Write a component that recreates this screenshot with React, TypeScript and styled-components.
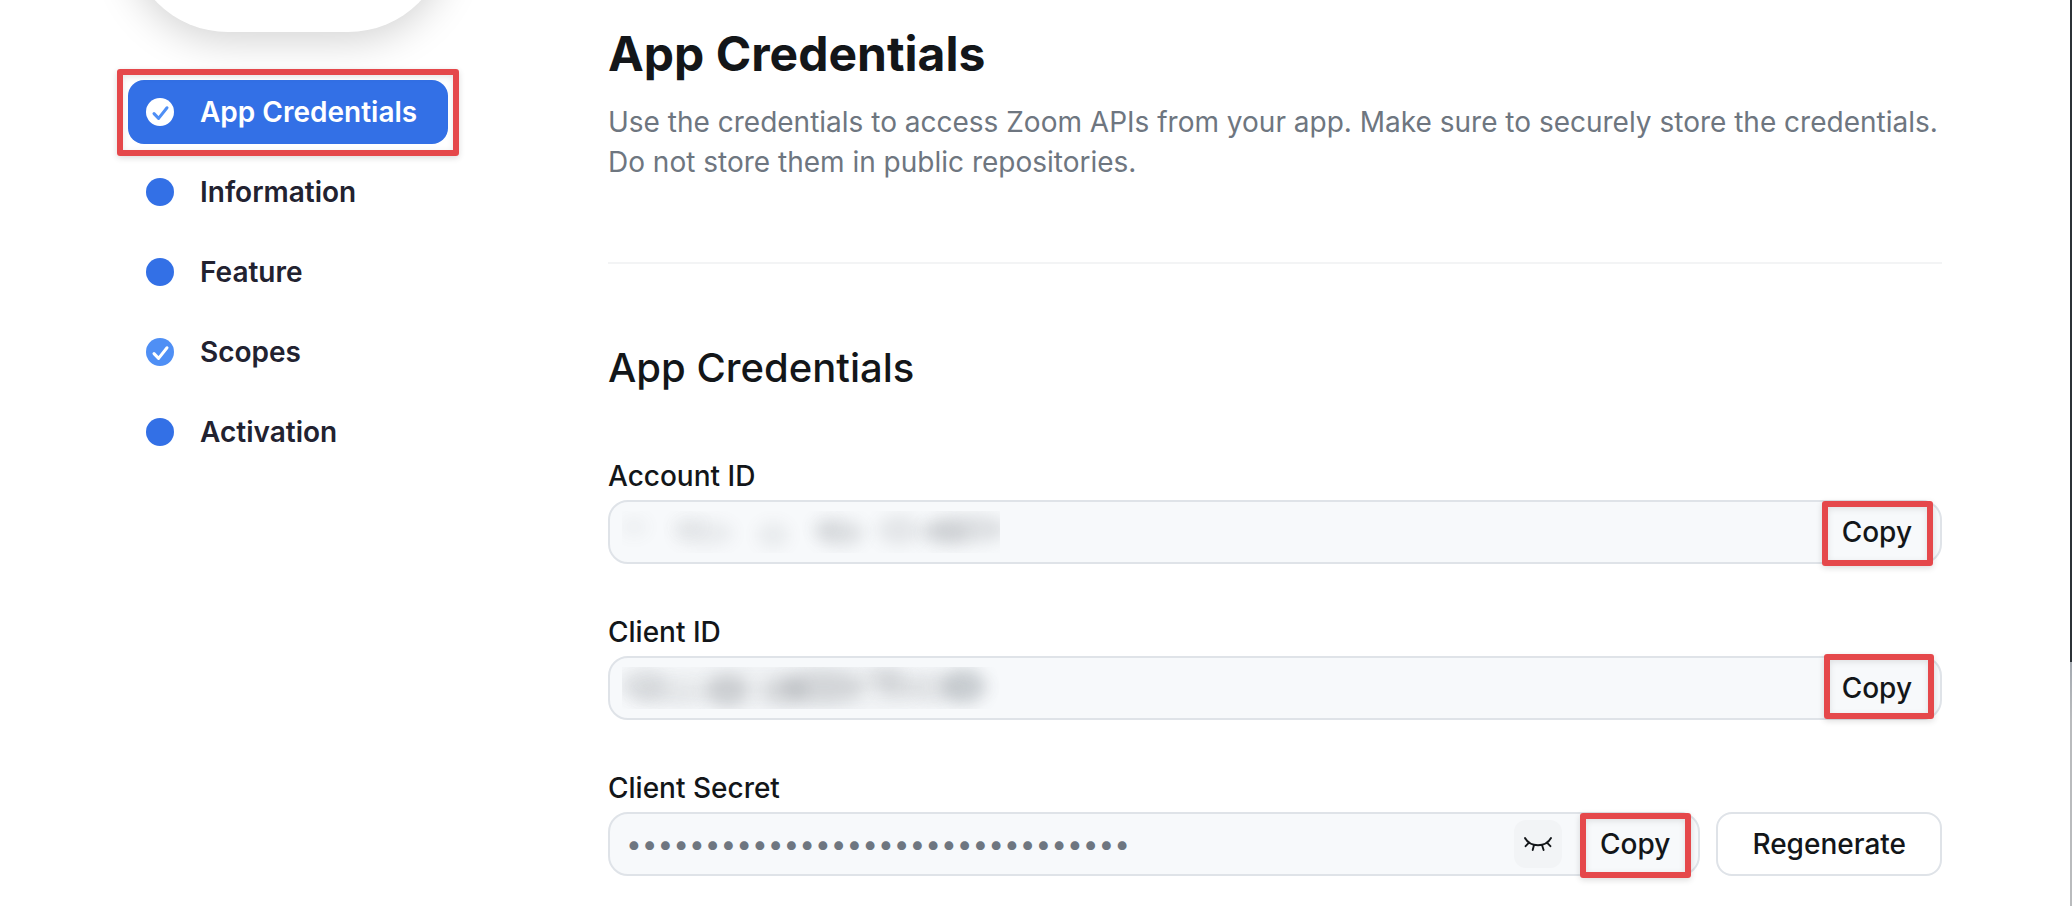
import React from "react";
import styled, { createGlobalStyle } from "styled-components";

const GlobalStyle = createGlobalStyle`
  *, *::before, *::after { box-sizing: border-box; }
  body {
    margin: 0;
    background: #fff;
    font-family: Inter, "Liberation Sans", sans-serif;
    font-size: 28px;
    color: #131619;
  }
  button, input { font: inherit; color: inherit; }
`;

const Page = styled.div`
  position: relative;
  display: flex;
  min-height: 100vh;
  padding: 0 130px 28px 128px;
  overflow: hidden;
`;

const Sidebar = styled.aside`
  width: 320px;
  flex: none;
  margin-right: 160px;
`;

const AppTile = styled.div`
  height: 320px;
  margin: -288px 0 48px;
  border-radius: 100px;
  background: #fff;
  box-shadow: 0 8px 40px rgba(0, 0, 0, 0.18);
`;

const Highlight = styled.span<{ $outset?: string }>`
  position: absolute;
  inset: ${(p) => p.$outset ?? "0"};
  border: 6px solid #e5484b;
  border-radius: 3px;
  box-shadow: 0 2px 6px rgba(0, 0, 0, 0.14), inset 0 2px 6px rgba(0, 0, 0, 0.1);
  pointer-events: none;
`;

const Nav = styled.nav`
  display: flex;
  flex-direction: column;
  gap: 16px;
`;

const NavLink = styled.a<{ $active?: boolean }>`
  position: relative;
  display: flex;
  align-items: center;
  gap: 26px;
  height: 64px;
  padding: 0 18px;
  border-radius: 16px;
  background: ${(p) => (p.$active ? "#3370e6" : "transparent")};
  color: ${(p) => (p.$active ? "#fff" : "#222230")};
  font-weight: 600;
  text-decoration: none;
  white-space: nowrap;
`;

const StepMark = styled.svg`
  width: 28px;
  height: 28px;
  flex: none;
`;

const Content = styled.main`
  flex: 1;
  min-width: 0;
`;

const Title = styled.h1`
  margin: 24px 0 0;
  font-size: 48px;
  line-height: 60px;
  font-weight: 700;
`;

const Description = styled.p`
  margin: 18px 0 0;
  line-height: 40px;
  color: #6e7680;
`;

const Divider = styled.hr`
  height: 2px;
  margin: 80px 0;
  border: 0;
  background: #f3f4f5;
`;

const SectionTitle = styled.h2`
  margin: 0 0 64px;
  font-size: 40px;
  line-height: 48px;
  font-weight: 500;
`;

const Fields = styled.div`
  display: flex;
  flex-direction: column;
  gap: 48px;
`;

const Label = styled.label`
  display: block;
  height: 44px;
  line-height: 40px;
  font-weight: 500;
`;

const FieldRow = styled.div`
  display: flex;
  gap: 16px;
`;

const InputBox = styled.div`
  flex: 1;
  min-width: 0;
  display: flex;
  align-items: center;
  height: 64px;
  border: 2px solid #dfe3e8;
  border-radius: 20px;
  background: #f7f9fb;
`;

const TextInput = styled.input`
  flex: 1;
  min-width: 0;
  height: 60px;
  padding: 0 16px;
  border: 0;
  outline: 0;
  background: transparent;
  color: #6e7680;
`;

const Redacted = styled.svg`
  flex: none;
  height: 42px;
  margin-left: 12px;
`;

const CopyButton = styled.button`
  position: relative;
  height: 60px;
  padding: 0 28px;
  border: 0;
  background: transparent;
  font-weight: 500;
`;

const EyeButton = styled.button`
  display: flex;
  align-items: center;
  justify-content: center;
  width: 48px;
  height: 48px;
  margin-right: 10px;
  padding: 0;
  border: 0;
  border-radius: 12px;
  background: #f2f4f6;
`;

const OutlineButton = styled.button`
  height: 64px;
  padding: 0 34px;
  border: 2px solid #dfe3e8;
  border-radius: 16px;
  background: #fff;
  font-weight: 500;
`;

const WindowEdge = styled.div`
  position: absolute;
  top: 0;
  right: 0;
  bottom: 0;
  width: 2px;
  background: linear-gradient(#2c3238 0 662px, #a3a9b0 662px, #b9bbbd 720px);
`;

type StepKind = "active" | "dot" | "done";

function Step({ kind }: { kind: StepKind }) {
  const fill = kind === "active" ? "#fff" : kind === "done" ? "#4f8ff5" : "#3370e6";
  return (
    <StepMark viewBox="0 0 28 28" aria-hidden="true">
      <circle cx="14" cy="14" r="14" fill={fill} />
      {kind !== "dot" && (
        <path
          d="M8 15.6 L12.6 20.4 L21 9.8"
          fill="none"
          stroke={kind === "active" ? "#4f8ff5" : "#fff"}
          strokeWidth="3"
          strokeLinecap="round"
          strokeLinejoin="round"
        />
      )}
    </StepMark>
  );
}

const steps: { label: string; kind: StepKind }[] = [
  { label: "App Credentials", kind: "active" },
  { label: "Information", kind: "dot" },
  { label: "Feature", kind: "dot" },
  { label: "Scopes", kind: "done" },
  { label: "Activation", kind: "dot" },
];

type Smudge = [x: number, y: number, rx: number, ry: number, opacity: number, color?: string];

const accountSmudges: Smudge[] = [
  [12, 16, 14, 10, 0.06],
  [66, 15, 16, 10, 0.06],
  [82, 22, 30, 13, 0.09],
  [151, 24, 16, 13, 0.09],
  [204, 16, 14, 10, 0.08],
  [218, 22, 24, 13, 0.17],
  [277, 19, 22, 15, 0.12],
  [322, 23, 24, 12, 0.12],
  [345, 18, 42, 14, 0.17],
];

const clientSmudges: Smudge[] = [
  [180, 20, 190, 26, 0.05],
  [22, 17, 22, 18, 0.11],
  [46, 26, 36, 13, 0.07],
  [105, 23, 22, 16, 0.23],
  [162, 24, 24, 14, 0.16],
  [201, 20, 42, 17, 0.18],
  [262, 10, 18, 11, 0.13],
  [276, 20, 20, 12, 0.12],
  [312, 21, 22, 15, 0.09],
  [342, 19, 21, 18, 0.28, "#67727a"],
];

function RedactedValue({ id, width, smudges }: { id: string; width: number; smudges: Smudge[] }) {
  return (
    <Redacted width={width} height="42" viewBox={`0 0 ${width} 42`} aria-hidden="true">
      <filter id={id} x="-80%" y="-120%" width="260%" height="340%">
        <feGaussianBlur stdDeviation="8" />
      </filter>
      {smudges.map(([x, y, rx, ry, opacity, color], i) => (
        <ellipse
          key={i}
          cx={x}
          cy={y}
          rx={rx}
          ry={ry}
          fill={color ?? "#5c6068"}
          opacity={opacity}
          filter={`url(#${id})`}
        />
      ))}
    </Redacted>
  );
}

function ClosedEye() {
  return (
    <svg
      width="28"
      height="14"
      viewBox="0 0 28 14"
      fill="none"
      stroke="#131619"
      strokeWidth="1.9"
      strokeLinecap="round"
      aria-hidden="true"
    >
      <path d="M1 1 C3.5 5.5 8 8.2 14 8.2 S24.5 5.5 27 1 M5 5.6 L1.6 9.2 M23 5.6 L26.4 9.2 M10 8 L8.7 13 M18 8 L19.6 13" />
    </svg>
  );
}

export default function App() {
  return (
    <Page>
      <GlobalStyle />
      <Sidebar>
        <AppTile />
        <Nav aria-label="App setup">
          {steps.map((s) => (
            <NavLink key={s.label} href="#" $active={s.kind === "active"}>
              <Step kind={s.kind} />
              {s.label}
              {s.kind === "active" && <Highlight $outset="-11px -11px -12px" />}
            </NavLink>
          ))}
        </Nav>
      </Sidebar>
      <Content>
        <Title>App Credentials</Title>
        <Description>
          Use the credentials to access Zoom APIs from your app. Make sure to securely store the
          credentials. Do not store them in public repositories.
        </Description>
        <Divider />
        <SectionTitle>App Credentials</SectionTitle>
        <Fields>
          <div>
            <Label htmlFor="account-id">Account ID</Label>
            <InputBox>
              <RedactedValue id="account-blur" width={378} smudges={accountSmudges} />
              <TextInput id="account-id" readOnly />
              <CopyButton type="button">
                Copy
                <Highlight $outset="-1px 7px -4px 8px" />
              </CopyButton>
            </InputBox>
          </div>
          <div>
            <Label htmlFor="client-id">Client ID</Label>
            <InputBox>
              <RedactedValue id="client-blur" width={400} smudges={clientSmudges} />
              <TextInput id="client-id" readOnly />
              <CopyButton type="button">
                Copy
                <Highlight $outset="-4px 6px -1px 10px" />
              </CopyButton>
            </InputBox>
          </div>
          <div>
            <Label htmlFor="client-secret">Client Secret</Label>
            <FieldRow>
              <InputBox>
                <TextInput
                  id="client-secret"
                  type="password"
                  readOnly
                  value="00000000000000000000000000000000"
                />
                <EyeButton type="button" aria-label="Show client secret">
                  <ClosedEye />
                </EyeButton>
                <CopyButton type="button">
                  Copy
                  <Highlight $outset="-1px 7px -4px 8px" />
                </CopyButton>
              </InputBox>
              <OutlineButton type="button">Regenerate</OutlineButton>
            </FieldRow>
          </div>
        </Fields>
      </Content>
      <WindowEdge />
    </Page>
  );
}
